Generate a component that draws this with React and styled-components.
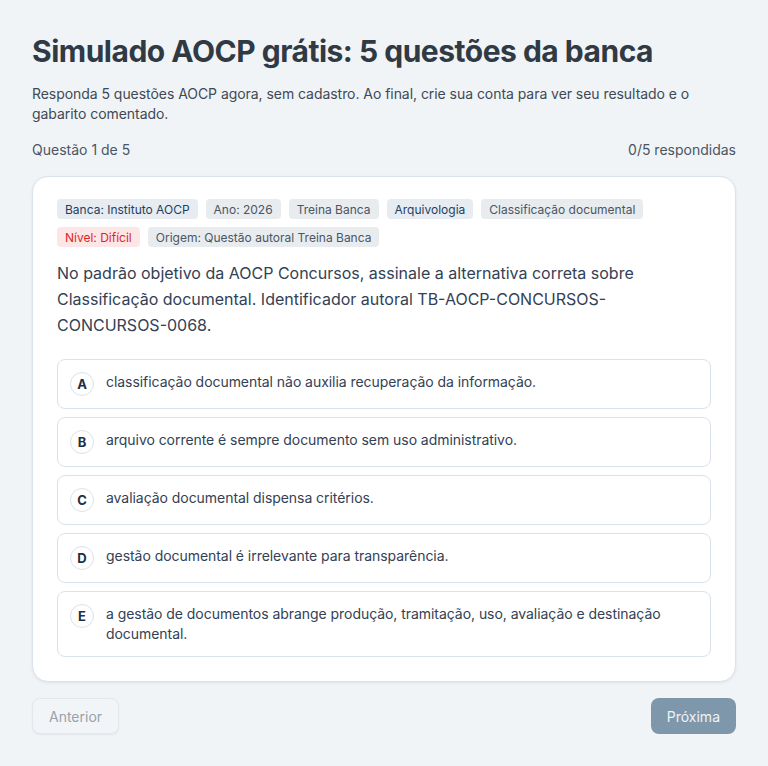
import React from 'react'
import styled, { createGlobalStyle } from 'styled-components'

const GlobalStyle = createGlobalStyle`
  * { box-sizing: border-box; }
  body {
    margin: 0;
    background: #f0f4f7;
    font-family: Inter, "Noto Sans", sans-serif;
    color: #374151;
  }
`

const tags = [
  { label: 'Banca: Instituto AOCP', tone: 'navy' },
  { label: 'Ano: 2026', tone: 'gray' },
  { label: 'Treina Banca', tone: 'gray' },
  { label: 'Arquivologia', tone: 'navy' },
  { label: 'Classificação documental', tone: 'gray' },
  { label: 'Nível: Difícil', tone: 'red' },
  { label: 'Origem: Questão autoral Treina Banca', tone: 'gray' },
]

const options = [
  { letter: 'A', text: 'classificação documental não auxilia recuperação da informação.' },
  { letter: 'B', text: 'arquivo corrente é sempre documento sem uso administrativo.' },
  { letter: 'C', text: 'avaliação documental dispensa critérios.' },
  { letter: 'D', text: 'gestão documental é irrelevante para transparência.' },
  { letter: 'E', text: 'a gestão de documentos abrange produção, tramitação, uso, avaliação e destinação documental.' },
]

const tagTones = {
  navy: { bg: '#e6ecf1', fg: '#1f3f5f' },
  gray: { bg: '#e8ecef', fg: '#4b5563' },
  red: { bg: '#fde6e6', fg: '#dc2626' },
}

export default function App() {
  return (
    <Page>
      <GlobalStyle />
      <Title>Simulado AOCP grátis: 5 questões da banca</Title>
      <Lead>
        Responda 5 questões AOCP agora, sem cadastro. Ao final, crie sua conta para ver seu resultado e o gabarito comentado.
      </Lead>

      <Progress>
        <span>Questão 1 de 5</span>
        <span>0/5 respondidas</span>
      </Progress>

      <Card>
        <TagList>
          {tags.map((t) => (
            <Tag key={t.label} tone={t.tone}>{t.label}</Tag>
          ))}
        </TagList>

        <Question>
          No padrão objetivo da AOCP Concursos, assinale a alternativa correta sobre Classificação documental. Identificador autoral TB-AOCP-CONCURSOS-CONCURSOS-0068.
        </Question>

        <OptionList>
          {options.map((o) => (
            <Option key={o.letter}>
              <Letter>{o.letter}</Letter>
              <OptionText>{o.text}</OptionText>
            </Option>
          ))}
        </OptionList>
      </Card>

      <Footer>
        <PrevButton disabled>Anterior</PrevButton>
        <NextButton>Próxima</NextButton>
      </Footer>
    </Page>
  )
}

const Page = styled.div`
  padding: 32px 32px;
  display: flex;
  flex-direction: column;
`

const Title = styled.h1`
  margin: 0;
  font-size: 30px;
  line-height: 38px;
  font-weight: 700;
  letter-spacing: -0.5px;
  color: #303a44;
`

const Lead = styled.p`
  margin: 14px 0 0;
  font-size: 14px;
  line-height: 20px;
  letter-spacing: -0.05px;
  color: #3f4954;
`

const Progress = styled.div`
  margin-top: 16px;
  display: flex;
  justify-content: space-between;
  font-size: 14px;
  line-height: 20px;
  color: #4b5563;
`

const Card = styled.div`
  margin-top: 16px;
  background: #fff;
  border: 1px solid #dbe2e9;
  border-radius: 16px;
  box-shadow: 0 1px 3px rgba(15, 23, 42, 0.08);
  padding: 22px 24px 24px;
`

const TagList = styled.div`
  display: flex;
  flex-wrap: wrap;
  gap: 8px;
`

const Tag = styled.span`
  display: inline-flex;
  align-items: center;
  height: 20px;
  padding: 0 8px;
  border-radius: 4px;
  font-size: 12px;
  background: ${(p) => tagTones[p.tone].bg};
  color: ${(p) => tagTones[p.tone].fg};
`

const Question = styled.p`
  margin: 13px 0 0;
  font-size: 16px;
  line-height: 26px;
  color: #334155;
`

const OptionList = styled.div`
  margin-top: 21px;
  display: flex;
  flex-direction: column;
  gap: 8px;
`

const Option = styled.div`
  display: flex;
  align-items: flex-start;
  gap: 12px;
  padding: 12px 12px;
  border: 1px solid #dbe2e9;
  border-radius: 8px;
  background: #fff;
`

const Letter = styled.span`
  flex: none;
  width: 24px;
  height: 24px;
  border-radius: 50%;
  border: 1px solid #dbe2e9;
  display: flex;
  align-items: center;
  justify-content: center;
  font-size: 13px;
  font-weight: 700;
  color: #1f2f3f;
`

const OptionText = styled.span`
  font-size: 14px;
  line-height: 20px;
  letter-spacing: -0.05px;
  color: #334155;
`

const Footer = styled.div`
  margin-top: 16px;
  display: flex;
  justify-content: space-between;
`

const PrevButton = styled.button`
  height: 36px;
  padding: 0 16px;
  border-radius: 8px;
  border: 1px solid #e3e8ed;
  background: #f2f5f8;
  color: #9aa1a9;
  font-family: inherit;
  font-size: 14px;
  box-shadow: 0 1px 2px rgba(15, 23, 42, 0.06);
`

const NextButton = styled.button`
  height: 36px;
  padding: 0 16px;
  border-radius: 8px;
  border: none;
  background: #7f97aa;
  color: #eef3f7;
  font-family: inherit;
  font-size: 14px;
`
